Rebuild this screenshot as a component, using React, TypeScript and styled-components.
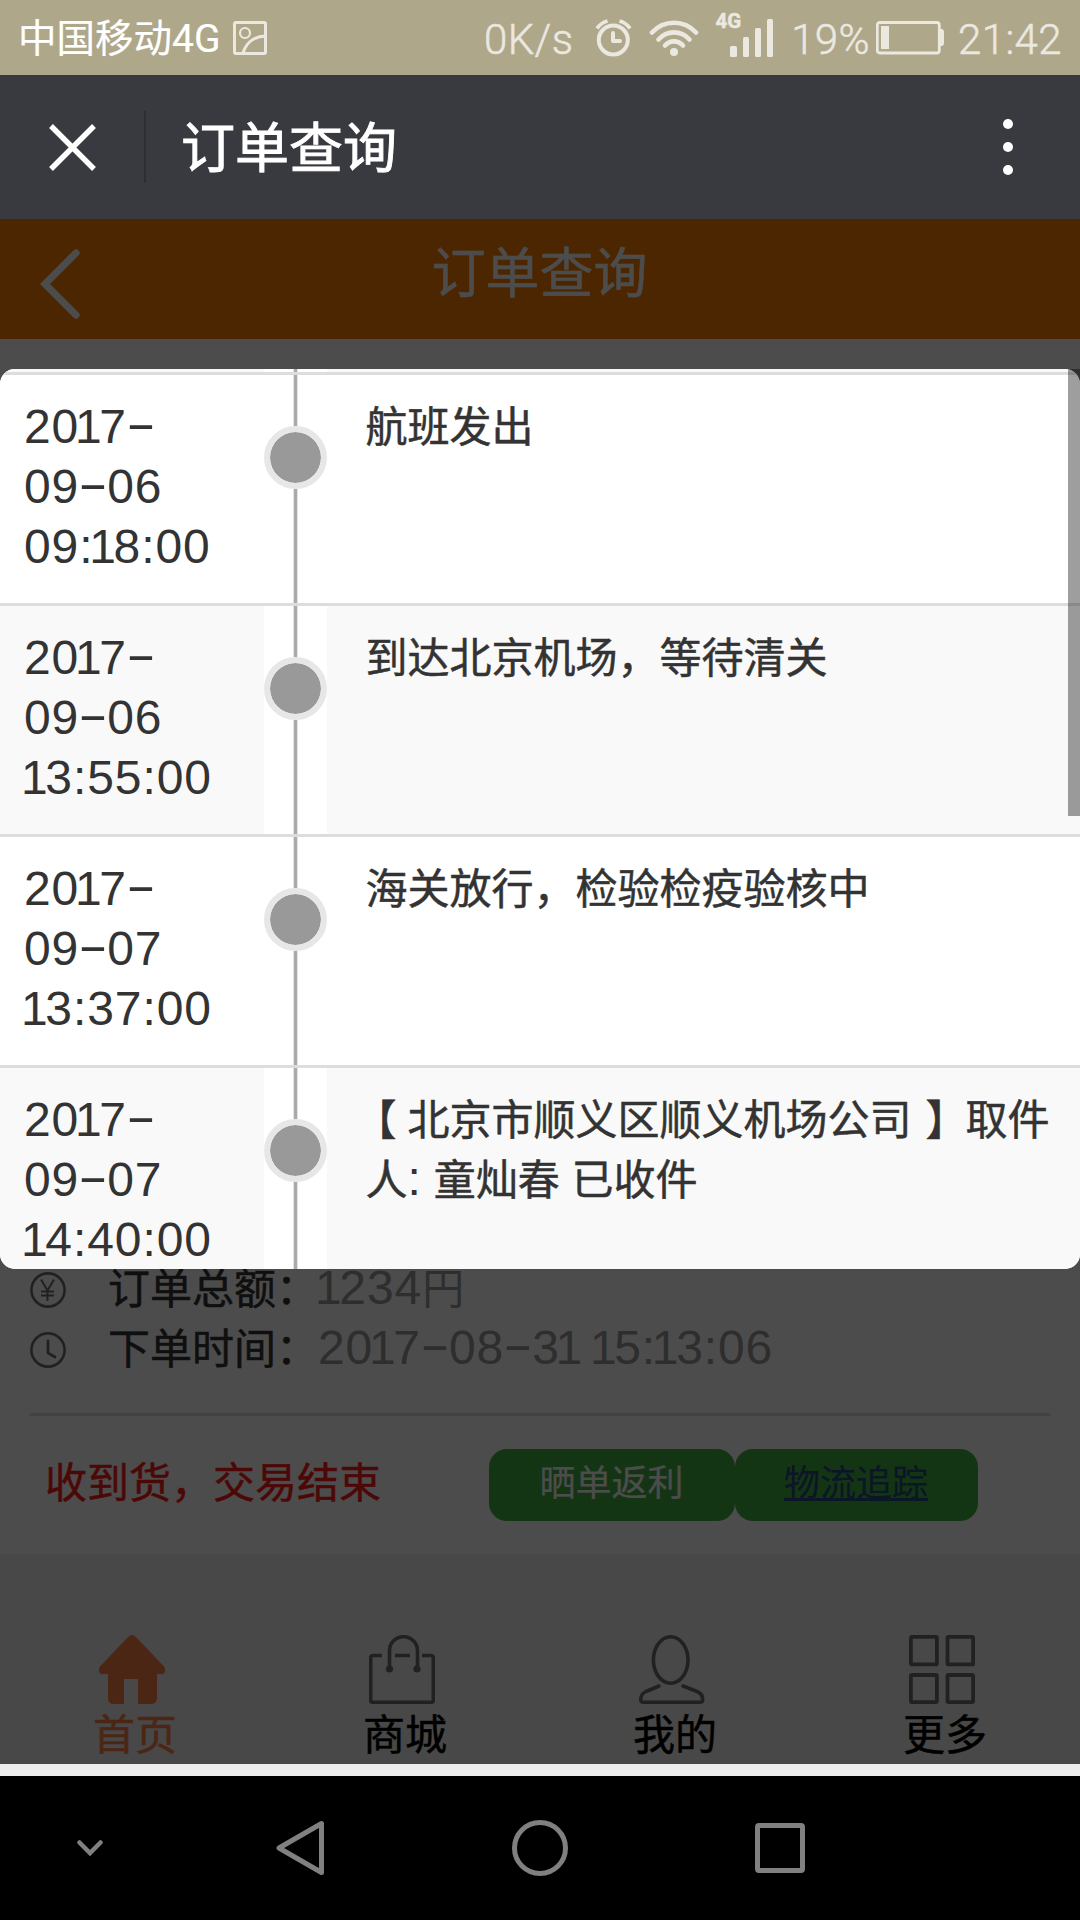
import React from "react";
import styled, { createGlobalStyle, css } from "styled-components";

const GlobalStyle = createGlobalStyle`
  *, *::before, *::after { box-sizing: border-box; }
  html, body { margin: 0; padding: 0; background: #000; }
  body {
    width: 1080px;
    font-family: "Noto Sans CJK SC", "Noto Sans", sans-serif;
    -webkit-font-smoothing: antialiased;
    -webkit-text-stroke-width: 0.5px;
  }
  svg { display: block; flex: none; }
`;

const Screen = styled.div`
  width: 1080px;
  height: 1920px;
  display: flex;
  flex-direction: column;
  overflow: hidden;
`;

/* ---------- system status bar ---------- */

const StatusBar = styled.header`
  height: 75px;
  flex: none;
  display: flex;
  align-items: center;
  justify-content: space-between;
  padding: 0 18px 0 18px;
  background: #afa78a;
  color: #ebe8e0;
`;

const StatusGroup = styled.div`
  display: flex;
  align-items: center;
  height: 75px;
`;

const Carrier = styled.span`
  color: #fff;
  font-size: 38.5px;
  line-height: 75px;
  white-space: nowrap;
  margin-right: 12px;
  -webkit-text-stroke-width: 0.2px;
`;

const CarrierNet = styled.span`
  font-family: Roboto, sans-serif;
  font-size: 39px;
`;

const StatusText = styled.span<{ $gap?: number }>`
  font-family: Roboto, sans-serif;
  font-weight: 300;
  font-size: 42px;
  letter-spacing: 0.4px;
  line-height: 78px;
  padding-top: 4px;
  margin-left: ${(p) => p.$gap ?? 0}px;
  white-space: nowrap;
`;

const NetTag = styled.span`
  align-self: flex-start;
  margin: 9px -11px 0 16px;
  font-family: Roboto, sans-serif;
  font-weight: 700;
  font-size: 20.5px;
  line-height: 24px;
`;

const StatusIcon = styled.svg<{ $gap?: number }>`
  margin-left: ${(p) => p.$gap ?? 0}px;
`;

/* ---------- app title bar ---------- */

const TitleBar = styled.div`
  height: 144px;
  flex: none;
  display: flex;
  align-items: center;
  padding: 0 67px 0 49px;
  background: #393a3f;
  color: #fff;
`;

const TitleDivider = styled.div`
  width: 2px;
  height: 72px;
  margin: 0 35px 0 48px;
  background: #2e2e32;
`;

const AppTitle = styled.h1`
  margin: 0 0 5px;
  flex: 1;
  font-size: 54px;
  font-weight: 400;
  line-height: 80px;
  -webkit-text-stroke-width: 0.9px;
`;

const MoreDots = styled.div`
  display: flex;
  flex-direction: column;
  gap: 13px;
`;

const MoreDot = styled.i`
  width: 10px;
  height: 10px;
  border-radius: 50%;
  background: #fff;
`;

/* ---------- page ---------- */

const WebView = styled.main`
  position: relative;
  height: 1545px;
  flex: none;
  display: flex;
  flex-direction: column;
  background: #fff;
`;

const PageHeader = styled.div`
  height: 120px;
  flex: none;
  display: grid;
  grid-template-columns: 160px 1fr 160px;
  align-items: center;
  background: #ff8000;
  color: #fff;
`;

const BackIcon = styled.svg`
  margin: 9px 0 0 40px;
`;

const PageTitle = styled.h2`
  margin: 0 1px 19px 0;
  text-align: center;
  font-size: 54px;
  font-weight: 400;
  line-height: 80px;
`;

const OrderBody = styled.section`
  margin-top: auto;
  padding: 0 30px;
`;

const InfoRow = styled.div`
  height: 60px;
  display: flex;
  align-items: center;
  color: #707070;
`;

const InfoLabel = styled.span`
  width: 210px;
  margin: 0 0 9px 42px;
  font-size: 42px;
  line-height: 60px;
  color: #333;
  white-space: nowrap;
`;

const InfoValue = styled.span`
  margin: 0 0 9px;
  font-size: 42px;
  line-height: 60px;
  color: #999;
  white-space: nowrap;
  -webkit-text-stroke-width: 0;
`;

const Actions = styled.div`
  height: 141px;
  margin-top: 33px;
  border-top: 3px solid #ddd;
  display: flex;
  align-items: flex-start;
  padding: 33px 0 0 15px;
`;

const OrderState = styled.span`
  width: 444px;
  color: #ff1a1a;
  font-size: 42px;
  line-height: 62px;
`;

const ActionButton = styled.a<{ $link?: boolean; $width: number }>`
  width: ${(p) => p.$width}px;
  height: 72px;
  padding-right: 1px;
  border-radius: 18px;
  background: #44b244;
  text-align: center;
  font-size: 36px;
  line-height: 62px;
  color: #fff;
  -webkit-text-stroke-width: 0.2px;
  ${(p) =>
    p.$link &&
    css`
      color: #264a80;
      text-decoration: underline;
      text-decoration-thickness: 3px;
      text-underline-offset: 2px;
      text-decoration-skip-ink: none;
    `}
`;

const TabBar = styled.nav`
  height: 210px;
  flex: none;
  display: grid;
  grid-template-columns: repeat(4, 1fr);
  background: #f0f0f0;
`;

const Tab = styled.div<{ $active?: boolean }>`
  display: flex;
  flex-direction: column;
  align-items: center;
  padding-top: 81px;
  color: ${(p) => (p.$active ? "#ff8045" : "#000")};
`;

const TabIcon = styled.svg`
  margin-right: 6px;
`;

const TabLabel = styled.span`
  font-size: 42px;
  line-height: 56px;
`;

/* ---------- tracking dialog ---------- */

const Backdrop = styled.div`
  position: absolute;
  inset: 0;
  background: rgba(0, 0, 0, 0.7);
`;

const Dialog = styled.div`
  position: absolute;
  top: 150px;
  left: 0;
  width: 1080px;
  height: 900px;
`;

const TrackList = styled.div`
  height: 100%;
  overflow: hidden;
  border-radius: 15px;
  background: #fff;
`;

const ScrollThumb = styled.div`
  position: absolute;
  top: 0;
  right: 0;
  width: 12px;
  height: 447px;
  background: rgba(0, 0, 0, 0.38);
`;

const TrackRow = styled.div<{ $alt?: boolean; $height?: number }>`
  display: grid;
  grid-template-columns: 264px 63px 1fr;
  height: ${(p) => p.$height ?? 231}px;
  border-bottom: 3px solid #ddd;
  background: ${(p) => (p.$alt ? "#f9f9f9" : "#fff")};
  color: #333;
`;

const TrackTime = styled.div`
  padding: 20px 0 0 24px;
  font-size: 42px;
  line-height: 60px;
`;

const TimeLine = styled.div`
  height: 60px;
  white-space: nowrap;
`;

const TrackAxis = styled.div`
  display: flex;
  flex-direction: column;
  align-items: center;
  overflow: hidden;
  background: #fff;
`;

const AxisLine = styled.i<{ $length?: number }>`
  width: 5px;
  border: solid #e4e4e4;
  border-width: 0 1px;
  background: #aaa;
  ${(p) => (p.$length ? `height: ${p.$length}px; flex: none;` : "flex: 1;")}
`;

const AxisDot = styled.i`
  width: 63px;
  height: 63px;
  flex: none;
  border: 6px solid #e7e7e7;
  border-radius: 50%;
  background: #999;
  background-clip: padding-box;
`;

const TrackText = styled.div`
  padding: 19px 20px 0 38.5px;
  font-size: 42px;
  line-height: 60px;
  word-spacing: 2.5px;
`;

const OpenBracket = styled.span`
  margin: 0 11px 0 -11px;
`;

const CloseBracket = styled.span`
  margin-left: 14px;
  letter-spacing: -14px;
`;

/* ---------- numerals ---------- */

const NumeralRun = styled.span`
  font-family: "Liberation Sans", Arial, sans-serif;
  font-size: 48px;
  line-height: 1;
  word-spacing: 0;
  -webkit-text-stroke-width: 0;
`;

const Tracked = styled.span<{ $space: number; $lead: boolean }>`
  letter-spacing: ${(p) => p.$space}px;
  margin-left: ${(p) => (p.$lead ? -3 : 0)}px;
`;

const WideDash = styled.span`
  display: inline-block;
  width: 14px;
  margin: 0 7px;
  text-align: center;
  text-indent: -1px;
  transform: translateY(-3px) scaleX(1.9);
`;

function advance(ch: string, next?: string) {
  let space = ch === "1" ? -2.4 : 0.9;
  if (next === "1") space -= 4.2;
  return space;
}

function Numerals({ children }: { children: string }) {
  return (
    <NumeralRun>
      {[...children].map((ch, i) =>
        ch === "-" ? (
          <WideDash key={i}>-</WideDash>
        ) : (
          <Tracked key={i} $space={advance(ch, children[i + 1])} $lead={i === 0 && ch === "1"}>
            {ch}
          </Tracked>
        )
      )}
    </NumeralRun>
  );
}

/* ---------- system navigation ---------- */

const PageFoot = styled.div`
  height: 12px;
  flex: none;
  background: #eee;
`;

const SystemNav = styled.footer`
  height: 144px;
  flex: none;
  display: grid;
  grid-template-columns: 180px 240px 240px 240px 1fr;
  align-items: center;
  justify-items: center;
  background: #000;
`;

type Track = { time: string[]; text: React.ReactNode };

const tracks: Track[] = [
  { time: ["2017-", "09-06", "09:18:00"], text: "航班发出" },
  { time: ["2017-", "09-06", "13:55:00"], text: "到达北京机场，等待清关" },
  { time: ["2017-", "09-07", "13:37:00"], text: "海关放行，检验检疫验核中" },
  {
    time: ["2017-", "09-07", "14:40:00"],
    text: (
      <>
        <OpenBracket>【</OpenBracket>北京市顺义区顺义机场公司
        <CloseBracket>】</CloseBracket> 取件
        <br />人<Numerals>:</Numerals> 童灿春 已收件
      </>
    ),
  },
];

function StatusIcons() {
  return (
    <>
      <StatusIcon $gap={22} width="37" height="38" viewBox="0 0 37 38" fill="none" stroke="#ebe8e0">
        <circle cx="18.3" cy="21" r="14.5" strokeWidth="4" />
        <path d="M18 14v8h7" strokeWidth="4" strokeLinejoin="round" strokeLinecap="round" />
        <path d="M2 9.5Q5.500 4 12.500 2M35 9.500Q31.500 4 24.500 2" strokeWidth="3.600" />
      </StatusIcon>
      <StatusIcon $gap={17} width="50" height="38" viewBox="0 0 50 38" fill="none" stroke="#ebe8e0" strokeWidth="4.600" strokeLinecap="round">
        <path d="M3 13.500C15 .5 35 .5 47 13.500" />
        <path d="M9.500 20.500C18 11 32 11 40.500 20.500" />
        <path d="M16 26.500C21 21 29 21 34 26.500" />
        <circle cx="25" cy="33" r="4" fill="#ebe8e0" stroke="none" />
      </StatusIcon>
      <NetTag>4G</NetTag>
      <StatusIcon width="44" height="38" viewBox="0 0 44 38" fill="#ebe8e0">
        <rect x="0" y="27" width="7" height="11" rx="1.500" />
        <rect x="13" y="18" width="6" height="20" rx="1.500" />
        <rect x="25" y="9" width="6" height="29" rx="1.500" />
        <rect x="37" y="0" width="6" height="38" rx="1.500" />
      </StatusIcon>
    </>
  );
}

export default function App() {
  return (
    <Screen>
      <GlobalStyle />
      <StatusBar>
        <StatusGroup>
          <Carrier>
            中国移动<CarrierNet>4G</CarrierNet>
          </Carrier>
          <svg width="34" height="34" viewBox="0 0 34 34" fill="none" stroke="#ebe8e0">
            <rect x="1.500" y="1.500" width="31" height="31" rx="1.500" strokeWidth="3" />
            <circle cx="12" cy="12" r="5" strokeWidth="2.200" />
            <path d="M10 32C13 22 21 15.500 32 15" strokeWidth="3" />
          </svg>
        </StatusGroup>
        <StatusGroup>
          <StatusText>0K/s</StatusText>
          <StatusIcons />
          <StatusText $gap={17}>19%</StatusText>
          <StatusIcon $gap={6} width="68" height="34" viewBox="0 0 68 34" fill="none" stroke="#ebe8e0">
            <rect x="1.300" y="1.500" width="62" height="30.500" rx="2.500" strokeWidth="2.800" />
            <rect x="5" y="5" width="8" height="23" fill="#ebe8e0" stroke="none" />
            <path d="M64 8h2.500l1.500 2v13l-1.500 2H64z" fill="#ebe8e0" stroke="none" />
          </StatusIcon>
          <StatusText $gap={14}>21:42</StatusText>
        </StatusGroup>
      </StatusBar>

      <TitleBar>
        <svg width="47" height="47" viewBox="0 0 47 47" stroke="#fff" strokeWidth="5.400">
          <path d="M2 2l43 43M45 2L2 45" />
        </svg>
        <TitleDivider />
        <AppTitle>订单查询</AppTitle>
        <MoreDots>
          <MoreDot />
          <MoreDot />
          <MoreDot />
        </MoreDots>
      </TitleBar>

      <WebView>
        <PageHeader>
          <BackIcon width="40" height="70" viewBox="0 0 40 70" fill="none" stroke="#fff" strokeWidth="7.200" strokeLinecap="round">
            <path d="M36 4L5 35l31 31" />
          </BackIcon>
          <PageTitle>订单查询</PageTitle>
        </PageHeader>

        <OrderBody>
          <InfoRow>
            <svg width="36" height="36" viewBox="0 0 36 36" fill="none" stroke="currentColor" strokeWidth="2.600">
              <circle cx="18" cy="18" r="16.600" />
              <path d="M11 7.500l6.500 11 6.500-11M17.500 18.500V29M11 19.500h13M11 23.500h13" strokeWidth="2" />
            </svg>
            <InfoLabel>订单总额：</InfoLabel>
            <InfoValue>
              <Numerals>1234</Numerals>円
            </InfoValue>
          </InfoRow>
          <InfoRow>
            <svg width="36" height="36" viewBox="0 0 36 36" fill="none" stroke="currentColor" strokeWidth="2.600">
              <circle cx="18" cy="18" r="16.600" />
              <path d="M18 9v12l7 4" strokeWidth="2.800" strokeLinecap="round" />
            </svg>
            <InfoLabel>下单时间：</InfoLabel>
            <InfoValue>
              <Numerals>2017-08-31 15:13:06</Numerals>
            </InfoValue>
          </InfoRow>
          <Actions>
            <OrderState>收到货，交易结束</OrderState>
            <ActionButton $width={246}>晒单返利</ActionButton>
            <ActionButton $width={243} $link>
              物流追踪
            </ActionButton>
          </Actions>
        </OrderBody>

        <TabBar>
          <Tab $active>
            <TabIcon width="66" height="69" viewBox="0 0 66 69" fill="currentColor">
              <path d="M29 2q4-4 8 0l28 29.500q1 1 1 2.500v2q0 3-3 3h-5v24q0 6-6 6H39V44H25v25H15q-6 0-6-6V39H3q-3 0-3-3v-2q0-1.500 1-2.500z" />
            </TabIcon>
            <TabLabel>首页</TabLabel>
          </Tab>
          <Tab>
            <TabIcon width="66" height="69" viewBox="0 0 66 69" fill="none" stroke="#707070" strokeWidth="3.600">
              <path d="M13 20.500H4q-2.300 0-2.300 2.300V65q0 2.300 2.300 2.300h58q2.300 0 2.300-2.300V22.800q0-2.300-2.300-2.300h-9M26 20.500h15" />
              <path d="M20.500 34V15.500a14 13.800 0 0 1 28 0V34" />
              <circle cx="20.500" cy="34" r="3.600" fill="#707070" stroke="none" />
              <circle cx="48" cy="34" r="3.600" fill="#707070" stroke="none" />
            </TabIcon>
            <TabLabel>商城</TabLabel>
          </Tab>
          <Tab>
            <TabIcon width="66" height="69" viewBox="0 0 66 69" fill="none" stroke="#707070" strokeWidth="3.600">
              <ellipse cx="31.700" cy="25" rx="17.300" ry="23.200" />
              <path d="M20 51L7 56.500Q1.800 59 1.800 64v1q0 2.200 2.500 2.200h57q2.300 0 2.300-2.200v-1q0-5-5.500-7.500L44 51" strokeLinecap="round" />
            </TabIcon>
            <TabLabel>我的</TabLabel>
          </Tab>
          <Tab>
            <TabIcon width="66" height="69" viewBox="0 0 66 69" fill="none" stroke="#707070" strokeWidth="3.800">
              <rect x="1.900" y="1.900" width="26" height="27.500" rx="1" />
              <rect x="38.500" y="1.900" width="25.600" height="27.500" rx="1" />
              <rect x="1.900" y="40" width="26" height="27.100" rx="1" />
              <rect x="38.500" y="40" width="25.600" height="27.100" rx="1" />
            </TabIcon>
            <TabLabel>更多</TabLabel>
          </Tab>
        </TabBar>

        <Backdrop />
        <Dialog>
          <TrackList>
            <TrackRow $alt $height={6}>
              <div />
              <TrackAxis>
                <AxisLine />
              </TrackAxis>
            </TrackRow>
            {tracks.map((track, i) => (
              <TrackRow key={i} $alt={i % 2 === 1}>
                <TrackTime>
                  {track.time.map((line) => (
                    <TimeLine key={line}>
                      <Numerals>{line}</Numerals>
                    </TimeLine>
                  ))}
                </TrackTime>
                <TrackAxis>
                  <AxisLine $length={51} />
                  <AxisDot />
                  <AxisLine />
                </TrackAxis>
                <TrackText>{track.text}</TrackText>
              </TrackRow>
            ))}
          </TrackList>
          <ScrollThumb />
        </Dialog>
      </WebView>

      <PageFoot />
      <SystemNav>
        <svg width="26" height="18" viewBox="0 0 26 18" fill="none" stroke="#808080" strokeWidth="4.500" strokeLinecap="round">
          <path d="M2.500 3.500L13 14 23.500 3.500" />
        </svg>
        <svg width="48" height="56" viewBox="0 0 48 56" fill="none" stroke="#808080" strokeWidth="5" strokeLinejoin="round">
          <path d="M45.500 3.500v49L3 28z" />
        </svg>
        <svg width="56" height="56" viewBox="0 0 56 56" fill="none" stroke="#808080" strokeWidth="5">
          <circle cx="28" cy="28" r="25.500" />
        </svg>
        <svg width="50" height="50" viewBox="0 0 50 50" fill="none" stroke="#808080" strokeWidth="5">
          <rect x="2.500" y="2.500" width="45" height="45" rx="1.500" />
        </svg>
      </SystemNav>
    </Screen>
  );
}
